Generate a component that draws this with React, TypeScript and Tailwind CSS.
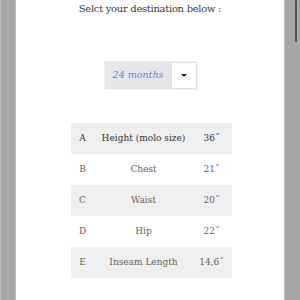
const rows = [
  { k: "A", label: "Height (molo size)", v: "36\u02dd", head: true },
  { k: "B", label: "Chest", v: "21\u02dd" },
  { k: "C", label: "Waist", v: "20\u02dd" },
  { k: "D", label: "Hip", v: "22\u02dd" },
  { k: "E", label: "Inseam Length", v: "14,6\u02dd" },
]

export default function App() {
  return (
    <div className="w-[300px] h-[300px] flex bg-[#a9a9a9] overflow-hidden" style={{ fontFamily: '"DejaVu Serif", serif' }}>
      <div className="w-[16px] h-full bg-[#a6a6a6] border-x border-[#bdbdbd]" />
      <div className="flex-1 bg-white flex flex-col items-center">
        <div className="mt-[1px] h-[15px] leading-[15px] text-[10px] font-medium tracking-[-0.3px] text-[#3a3a3a]">Selct your destination below :</div>
        <div className="mt-[46px] flex h-[27px] ml-[2px] shadow-[0_0_0_1px_#f3f3f3]">
          <div className="w-[66px] bg-[#e5e5ea] flex items-center justify-center text-[9.5px] italic text-[#5b8fc4]">
            24 months
          </div>
          <div className="w-[26px] bg-white border border-[#e3e3e3] flex items-center justify-center">
            <span className="block w-0 h-0 border-x-[3px] border-x-transparent border-t-[3px] border-t-[#222]" />
          </div>
        </div>
        <div className="mt-[34px] w-[161px] ml-[2px] flex flex-col">
          {rows.map((r, i) => (
            <div
              key={r.k}
              className={`h-[31px] flex items-center text-[9px] ${i % 2 === 0 ? "bg-[#efefef]" : "bg-white"} ${r.head ? "text-[#333]" : "text-[#666]"}`}
            >
              <div className="w-[22px] text-center ml-[1px]">{r.k}</div>
              <div className="flex-1 text-center">{r.label}</div>
              <div className="w-[36px] text-center mr-[2px]">{r.v}</div>
            </div>
          ))}
        </div>
      </div>
      <div className="w-[16px] h-full bg-[#a6a6a6] border-l border-[#c4c4c4] relative">
        <div className="absolute left-[10px] top-0 w-[2px] h-[42px] bg-[#555] rounded-full" />
      </div>
    </div>
  )
}
